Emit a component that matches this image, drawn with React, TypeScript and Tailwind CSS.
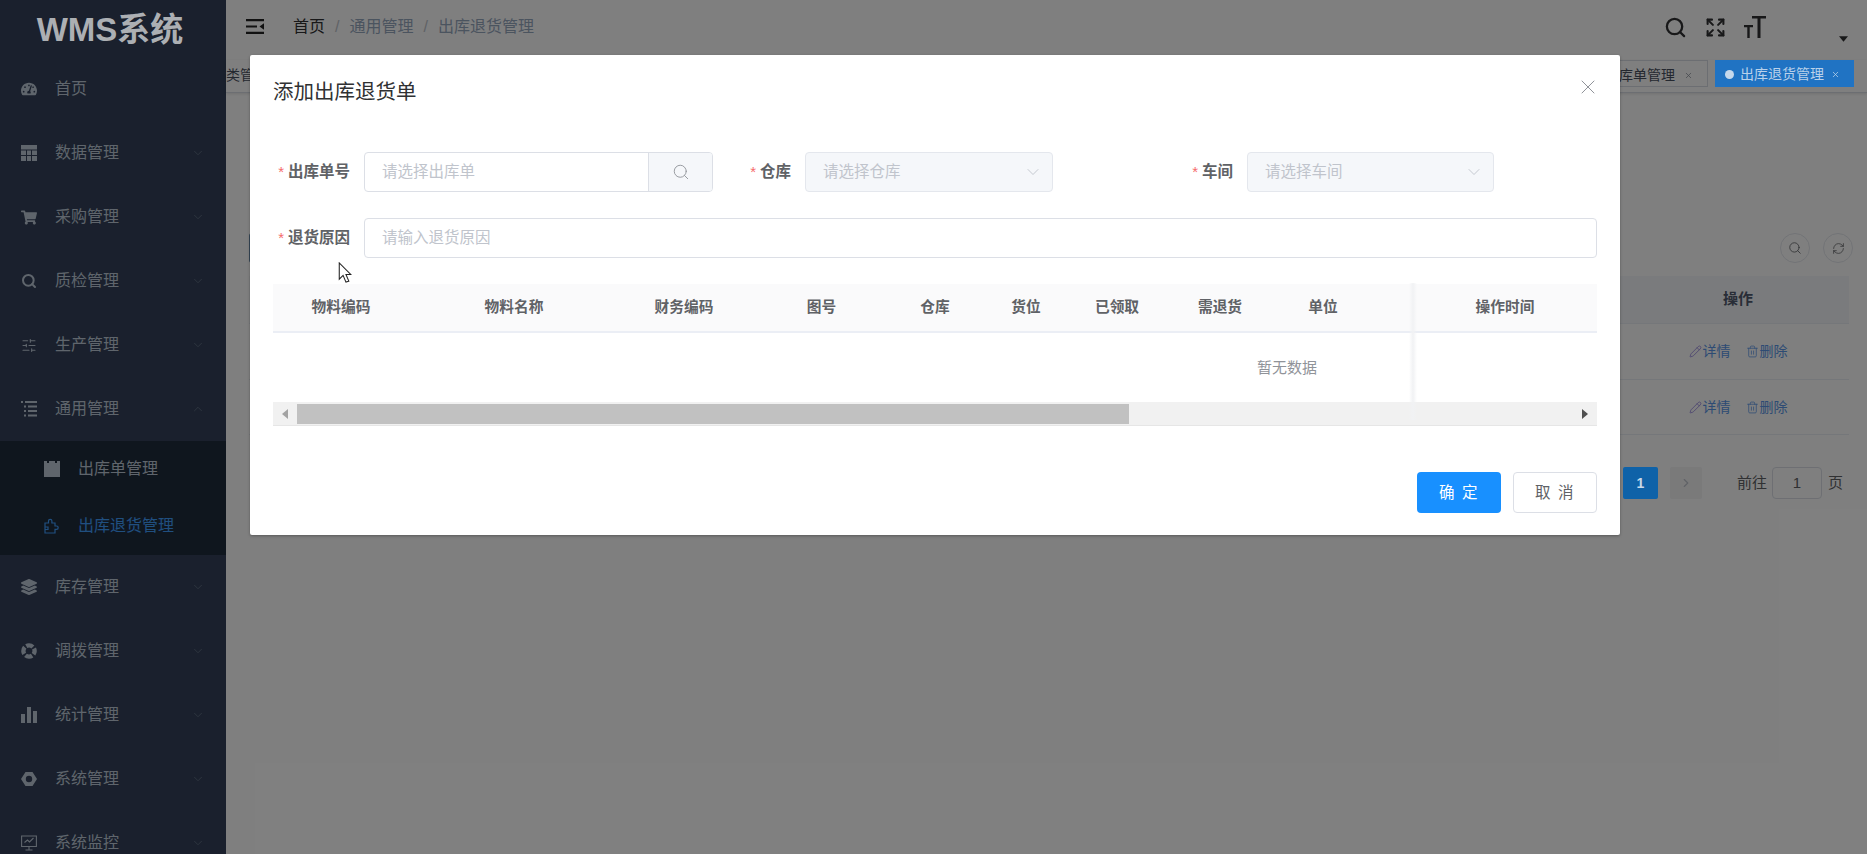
import React from "react";
import { ChevronDown, ChevronUp, Search, SlidersHorizontal, Expand, X, RefreshCw, Pencil, Trash2, ChevronRight } from "lucide-react";
import { FaTachometerAlt, FaShoppingCart, FaLayerGroup } from "react-icons/fa";

const TableIcon = () => (
  <svg viewBox="0 0 16 16" className="w-4 h-4" fill="currentColor">
    <path d="M0 0h16v4.500H0zM0 5.500h5V10H0zM6 5.500h4V10H6zM11 5.500h5V10h-5zM0 11h5v5H0zM6 11h4v5H6zM11 11h5v5h-5z" />
  </svg>
);
const ListIcon = () => (
  <svg viewBox="0 0 16 16" className="w-4 h-4" fill="currentColor">
    <path d="M0 0h2v2H0zM4 0h12v2H4zM3 4.500h2v2H3zM7 4.500h9v2H7zM3 9h2v2H3zM7 9h9v2H7zM3 13.500h2v2H3zM7 13.500h9v2H7z" />
  </svg>
);
const NoteIcon = () => (
  <svg viewBox="0 0 16 16" className="w-4 h-4" fill="currentColor">
    <path d="M0 0h3v2h2V0h6v2h2V0h3v16H0z" />
  </svg>
);
const PuzzleIcon = () => (
  <svg viewBox="0 0 16 16" className="w-4 h-4" fill="none" stroke="currentColor" strokeWidth="1.200">
    <path d="M1 5h3.500V3a1.700 1.700 0 0 1 3.400 0v2H11v3h1.500a1.700 1.700 0 0 1 0 3.400H11V15H1zM1 9h3v2.500H1" />
  </svg>
);
const RingIcon = () => (
  <svg viewBox="0 0 16 16" className="w-4 h-4" fill="none" stroke="currentColor" strokeWidth="4.400">
    <circle cx="8" cy="8" r="5.600" strokeDasharray="7 1.800" strokeDashoffset="3.500" />
  </svg>
);
const BarsIcon = () => (
  <svg viewBox="0 0 16 16" className="w-4 h-4" fill="currentColor">
    <path d="M0 7h4v9H0zM6 0h4v16H6zM12 4h4v12h-4z" />
  </svg>
);
const HexIcon = () => (
  <svg viewBox="0 0 16 16" className="w-4 h-4" fill="currentColor">
    <path fillRule="evenodd" d="M4.500 1h7L16 8l-4.500 7h-7L0 8zM8 4.800a3.200 3.200 0 1 0 0 6.400 3.200 3.200 0 0 0 0-6.400z" />
  </svg>
);
const MonitorIcon = () => (
  <svg viewBox="0 0 16 16" className="w-4 h-4" fill="none" stroke="currentColor" strokeWidth="1.100">
    <path d="M.6 1h14.800v10.500H.6zM3.500 7.500l3-2.500 2 2 4-4M8 11.500V15M4.500 15h7" />
  </svg>
);
const Hamburger = () => (
  <svg viewBox="0 0 18 15" className="w-[18px] h-[15px]" fill="currentColor">
    <path d="M0 0h18v2.200H0zM0 6.400h11v2.200H0zM0 12.800h18V15H0zM18 4.200v6.600l-4.500-3.300z" />
  </svg>
);
const TextSizeIcon = () => (
  <svg viewBox="0 0 22 24" className="w-[22px] h-[24px]" fill="currentColor">
    <path d="M8 1h14v2.600h-5.500V23h-3V3.600H8zM0 10h9v2.200H5.700V23H3.300V12.200H0z" />
  </svg>
);

const menu: [string, React.ReactNode][] = [
  ["数据管理", <TableIcon />],
  ["采购管理", <FaShoppingCart size={17} />],
  ["质检管理", <Search size={18} strokeWidth={3} />],
  ["生产管理", <SlidersHorizontal size={17} strokeWidth={1.6} />],
];
const menu2: [string, React.ReactNode][] = [
  ["库存管理", <FaLayerGroup size={16} />],
  ["调拨管理", <RingIcon />],
  ["统计管理", <BarsIcon />],
  ["系统管理", <HexIcon />],
  ["系统监控", <MonitorIcon />],
];

const MenuRow = ({ label, icon, arrow = "down", h = "h-[64px]" }: { label: string; icon: React.ReactNode; arrow?: "down" | "up" | "none"; h?: string }) => (
  <div className={`${h} shrink-0 flex items-center pl-[21px] pr-[21px] text-[#bfcbd9]`}>
    <span className="w-[16px] h-[16px] flex items-center justify-center mr-[18px]">{icon}</span>
    <span className="text-[16px] flex-1">{label}</span>
    {arrow === "down" && <ChevronDown size={14} strokeWidth={1.2} className="text-[#6b7a8d]" />}
    {arrow === "up" && <ChevronUp size={14} strokeWidth={1.2} className="text-[#6b7a8d]" />}
  </div>
);

const cols: [string, string][] = [
  ["物料编码", "w-[136px]"],
  ["物料名称", "w-[210px]"],
  ["财务编码", "w-[130px]"],
  ["图号", "w-[145px]"],
  ["仓库", "w-[82px]"],
  ["货位", "w-[100px]"],
  ["已领取", "w-[82px]"],
  ["需退货", "w-[124px]"],
  ["单位", "w-[82px]"],
  ["", "w-[49px]"],
  ["操作时间", "w-[184px]"],
];

const Label = ({ text, w }: { text: string; w: string }) => (
  <div className={`${w} shrink-0 flex justify-end items-center pr-[14px] text-[15.500px] font-bold text-[#606266]`}>
    <span className="text-[#f56c6c] font-normal mr-[4px] text-[15px]">*</span>
    {text}
  </div>
);

const SelectBox = ({ text, w }: { text: string; w: string }) => (
  <div className={`${w} h-[40px] shrink-0 rounded-[4px] border border-[#e4e7ed] bg-[#f5f7fa] flex items-center pl-[17px] pr-[9px] text-[15.500px] text-[#c0c4cc]`}>
    <span className="flex-1">{text}</span>
    <ChevronDown size={20} strokeWidth={1.1} className="text-[#c0c4cc]" />
  </div>
);

const RowOps = ({ h }: { h: string }) => (
  <div className={`${h} flex border-b border-[#ebeef5]`}>
    <div className="flex-1" />
    <div className="w-[222px] flex items-center justify-center gap-[15px] text-[14px] text-[#5b97e8]">
      <span className="flex items-center gap-[1px]"><Pencil size={13} strokeWidth={1.4} className="text-[#8d7cdb]" />详情</span>
      <span className="flex items-center gap-[1px]"><Trash2 size={13} strokeWidth={1.4} />删除</span>
    </div>
  </div>
);

export default function App() {
  return (
    <div className="relative w-full h-[854px] overflow-hidden flex bg-white font-['Liberation_Sans','Noto_Sans_CJK_SC',sans-serif]">
      <aside className="w-[226px] h-[854px] shrink-0 overflow-hidden bg-[#34415a] flex flex-col shadow-[2px_0_6px_rgba(0,21,41,0.35)]">
        <div className="relative z-20 h-[56px] shrink-0 flex items-center justify-center text-[33px] font-bold text-[#acafb3] pr-[6px] pt-[3px]">WMS系统</div>
        <MenuRow label="首页" icon={<FaTachometerAlt size={16} />} arrow="none" h="h-[65px]" />
        {menu.map(([l, i]) => <MenuRow key={l} label={l} icon={i} />)}
        <MenuRow label="通用管理" icon={<ListIcon />} arrow="up" />
        <div className="bg-[#1f2d3d] shrink-0">
          <div className="h-[56px] flex items-center pl-[44px] text-[#bfcbd9]">
            <span className="w-4 h-4 mr-[18px]"><NoteIcon /></span>
            <span className="text-[16px]">出库单管理</span>
          </div>
          <div className="h-[58px] flex items-center pl-[44px] text-[#409eff]">
            <span className="w-4 h-4 mr-[18px] flex items-center justify-center"><PuzzleIcon /></span>
            <span className="text-[16px]">出库退货管理</span>
          </div>
        </div>
        {menu2.map(([l, i]) => <MenuRow key={l} label={l} icon={i} />)}
      </aside>

      <main className="flex-1 min-w-0 flex flex-col bg-white">
        <header className="h-[60px] shrink-0 flex items-center pl-[20px] pr-[14px]">
          <span className="text-[#222222] flex -mt-[8px]"><Hamburger /></span>
          <nav className="flex items-center text-[16px] ml-[29px] -mt-[6px]">
            <span className="text-[#303133]">首页</span>
            <span className="mx-[10px] text-[#c0c4cc]">/</span>
            <span className="text-[#97a8be]">通用管理</span>
            <span className="mx-[10px] text-[#c0c4cc]">/</span>
            <span className="text-[#97a8be]">出库退货管理</span>
          </nav>
          <div className="flex-1" />
          <div className="flex items-center gap-[18px] text-[#303133] -mt-[6px] mr-[73px]">
            <Search size={23} strokeWidth={2.4} />
            <Expand size={21} strokeWidth={2.4} />
            <TextSizeIcon />
          </div>
          <svg viewBox="0 0 10 6" className="w-[9px] h-[6px] text-[#303133] mt-[18px] mr-[5px]" fill="currentColor"><path d="M0 0h10L5 6z" /></svg>
        </header>

        <div className="h-[33px] shrink-0 flex border-b border-[#d8dce5] shadow-[0_1px_3px_rgba(0,0,0,0.12)] overflow-hidden pr-[13px] text-[14px]">
          <div className="shrink-0 h-[27px] flex items-center text-[#495060] pt-[4px]">类管理</div>
          <div className="flex-1" />
          <div className="h-[27px] shrink-0 flex items-center border border-[#d8dce5] text-[#495060] pl-[8px] pr-[14px] pt-[3px]">
            <span>出库单管理</span>
            <X size={9} className="ml-[9px] text-[#8a8f99]" />
          </div>
          <div className="relative z-20 h-[27px] w-[139px] ml-[7px] shrink-0 flex items-center bg-[#2073c3] text-[#b9d1ea] pl-[10px] pt-[2px]">
            <span className="w-[9px] h-[9px] rounded-full bg-[#c5d8ec] mr-[6px]" />
            <span>出库退货管理</span>
            <X size={9} className="ml-[7px]" />
          </div>
        </div>

        <div className="flex-1 flex flex-col pl-[23px] pr-[18px] pt-[140px]">
          <div className="h-[30px] flex justify-between -mr-[4px]">
            <span className="w-[60px] h-[30px] rounded-[3px] bg-[#6a8cab]" />
            <div className="flex gap-[13px]">
              <span className="w-[30px] h-[30px] rounded-full border border-[#e4e7ed] flex items-center justify-center text-[#606266]"><Search size={14} strokeWidth={1.4} /></span>
              <span className="w-[30px] h-[30px] rounded-full border border-[#e4e7ed] flex items-center justify-center text-[#606266]"><RefreshCw size={13} strokeWidth={1.4} /></span>
            </div>
          </div>
          <div className="mt-[13px]">
            <div className="h-[48px] flex bg-[#f5f7fa] border-b border-[#ebeef5]">
              <div className="flex-1" />
              <div className="w-[222px] flex items-center justify-center text-[15px] font-bold text-[#515a6e]">操作</div>
            </div>
            <RowOps h="h-[56px]" />
            <RowOps h="h-[55px]" />
          </div>
          <div className="mt-[32px] flex items-center justify-end pr-[6px] text-[15px] text-[#606266]">
            <span className="relative z-20 w-[35px] h-[32px] rounded-[2px] bg-[#0f62a8] text-[#c9d9e8] font-bold text-[14px] flex items-center justify-center">1</span>
            <span className="ml-[12px] w-[32px] h-[32px] rounded-[2px] bg-[#f4f4f5] text-[#c0c4cc] flex items-center justify-center"><ChevronRight size={14} /></span>
            <span className="ml-[35px]">前往</span>
            <span className="ml-[5px] mr-[6px] w-[50px] h-[32px] rounded-[4px] border border-[#dcdfe6] flex items-center justify-center">1</span>
            <span>页</span>
          </div>
        </div>
      </main>

      <div className="absolute inset-0 z-10 bg-black/50 pl-[250px] pt-[55px]">
        <section className="w-[1370px] h-[480px] bg-white shadow-[0_1px_3px_rgba(0,0,0,0.3)] rounded-[2px] px-[23px] flex flex-col">
          <div className="h-[97px] shrink-0 flex items-start pt-[23px]">
            <h2 className="flex-1 text-[20.500px] leading-[28px] text-[#303133]">添加出库退货单</h2>
            <X size={24} strokeWidth={1} className="-mt-[3px] -mr-[3px] text-[#909399]" />
          </div>
          <div className="flex h-[40px] shrink-0">
            <Label text="出库单号" w="w-[91px]" />
            <div className="w-[349px] shrink-0 flex rounded-[4px] border border-[#dcdfe6] overflow-hidden text-[15.500px]">
              <div className="flex-1 flex items-center pl-[17px] text-[#c0c4cc]">请选择出库单</div>
              <div className="w-[64px] flex items-center justify-center bg-[#f5f7fa] border-l border-[#dcdfe6] text-[#909399]"><Search size={18} strokeWidth={1.2} /></div>
            </div>
            <Label text="仓库" w="w-[92px]" />
            <SelectBox text="请选择仓库" w="w-[248px]" />
            <Label text="车间" w="w-[194px]" />
            <SelectBox text="请选择车间" w="w-[247px]" />
          </div>
          <div className="flex h-[40px] shrink-0 mt-[26px]">
            <Label text="退货原因" w="w-[91px]" />
            <div className="flex-1 rounded-[4px] border border-[#dcdfe6] flex items-center pl-[17px] text-[15.500px] text-[#c0c4cc]">请输入退货原因</div>
          </div>

          <div className="relative mt-[26px] shrink-0">
            <div className="h-[49px] flex bg-[#fafafb] border-b-2 border-[#ebeef5] text-[14.700px] font-bold text-[#606266]">
              {cols.map(([t, w], i) => (
                <div key={i} className={`${w} shrink-0 flex items-center justify-center`}>{t}</div>
              ))}
            </div>
            <div className="h-[69px] flex items-center pl-[984px] pt-[2px] text-[15px] text-[#909399]">暂无数据</div>
            <div className="h-[24px] bg-[#f1f1f1] border-b border-[#e6e6e6] flex items-center">
              <span className="w-[24px] shrink-0 flex justify-center">
                <svg viewBox="0 0 6 10" className="w-[6px] h-[10px] text-[#a3a3a3]" fill="currentColor"><path d="M6 0v10L0 5z" /></svg>
              </span>
              <span className="w-[832px] h-[20px] bg-[#c1c1c1] shrink-0" />
              <span className="flex-1" />
              <span className="w-[24px] shrink-0 flex justify-center">
                <svg viewBox="0 0 6 10" className="w-[6px] h-[10px] text-[#505050]" fill="currentColor"><path d="M0 0v10l6-5z" /></svg>
              </span>
            </div>
            <span className="absolute left-[1136px] top-[-1px] w-[8px] h-[137px] bg-linear-to-r from-transparent via-[#f1f2f4] to-transparent" />
          </div>

          <div className="flex justify-end gap-[12px] mt-[46px] shrink-0">
            <button className="w-[84px] h-[41px] rounded-[4px] bg-[#1890ff] text-white text-[15.500px] tracking-[1.500px]">确 定</button>
            <button className="w-[84px] h-[41px] rounded-[4px] border border-[#dcdfe6] bg-white text-[#606266] text-[15.500px] tracking-[1.500px]">取 消</button>
          </div>
        </section>
        <svg viewBox="0 0 14 23" className="absolute left-[338px] top-[262px] w-[14px] h-[22px]">
          <path d="M1 1v17l4-4 3 7 3-1-3-7h5z" fill="#fff" stroke="#222" strokeWidth="1.100" />
        </svg>
      </div>
    </div>
  );
}
